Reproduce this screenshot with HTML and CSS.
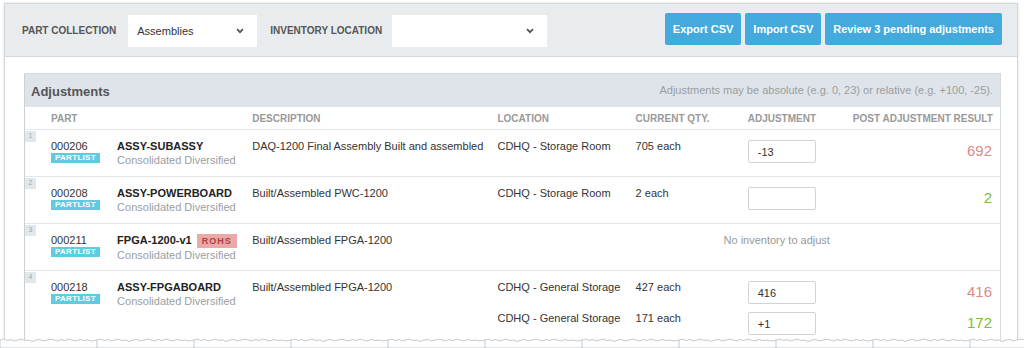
FILE: index.html
```html
<!DOCTYPE html>
<html lang="en">
<head>
  <meta charset="UTF-8" />
  <title>Inventory | Adjustments</title>
  <link rel="stylesheet" href="styles.css">
</head>
<body>
  <div class="frame">
    <div class="toolbar">
      <span class="tb-label">Part Collection</span>
      <div class="select"><span>Assemblies</span><svg width="8" height="6" viewBox="0 0 8 6"><path d="M1 1.2 4 4.2 7 1.2" fill="none" stroke="#555" stroke-width="1.8"/></svg></div>
      <span class="tb-label loc">Inventory Location</span>
      <div class="select wide"><span></span><svg width="8" height="6" viewBox="0 0 8 6"><path d="M1 1.2 4 4.2 7 1.2" fill="none" stroke="#555" stroke-width="1.8"/></svg></div>
      <div class="actions">
        <button>Export CSV</button>
        <button>Import CSV</button>
        <button>Review 3 pending adjustments</button>
      </div>
    </div>

    <div class="content">
      <div class="panel">
        <div class="panel-head">
          <h2>Adjustments</h2>
          <span class="note">Adjustments may be absolute (e.g. 0, 23) or relative (e.g. +100, -25).</span>
        </div>
        <table>
          <colgroup>
            <col style="width:92px"><col style="width:135px"><col style="width:245px"><col style="width:138px">
            <col style="width:112px"><col style="width:105px"><col style="width:147px">
          </colgroup>
          <thead>
            <tr><th class="c-part">Part</th><th></th><th>Description</th><th>Location</th><th>Current Qty.</th><th>Adjustment</th><th class="c-res">Post Adjustment Result</th></tr>
          </thead>
          <tbody>
            <tr class="item">
              <td class="c-part"><span class="num">1</span>000206<br><span class="tag">Partlist</span></td>
              <td><b>ASSY-SUBASSY</b><div class="muted">Consolidated Diversified</div></td>
              <td>DAQ-1200 Final Assembly Built and assembled</td>
              <td>CDHQ - Storage Room</td>
              <td>705 each</td>
              <td><input class="adj" value="-13"></td>
              <td class="c-res down">692</td>
            </tr>
            <tr class="item">
              <td class="c-part"><span class="num">2</span>000208<br><span class="tag">Partlist</span></td>
              <td><b>ASSY-POWERBOARD</b><div class="muted">Consolidated Diversified</div></td>
              <td>Built/Assembled PWC-1200</td>
              <td>CDHQ - Storage Room</td>
              <td>2 each</td>
              <td><input class="adj" value=""></td>
              <td class="c-res up">2</td>
            </tr>
            <tr class="item">
              <td class="c-part"><span class="num">3</span>000211<br><span class="tag">Partlist</span></td>
              <td><b>FPGA-1200-v1</b><span class="rohs">ROHS</span><div class="muted">Consolidated Diversified</div></td>
              <td>Built/Assembled FPGA-1200</td>
              <td colspan="4" class="empty">No inventory to adjust</td>
            </tr>
            <tr class="sub first">
              <td class="c-part" rowspan="2"><span class="num">4</span>000218<br><span class="tag">Partlist</span></td>
              <td rowspan="2"><b>ASSY-FPGABOARD</b><div class="muted">Consolidated Diversified</div></td>
              <td rowspan="2">Built/Assembled FPGA-1200</td>
              <td>CDHQ - General Storage</td>
              <td>427 each</td>
              <td><input class="adj" value="416"></td>
              <td class="c-res down">416</td>
            </tr>
            <tr class="sub">
              <td>CDHQ - General Storage</td>
              <td>171 each</td>
              <td><input class="adj" value="+1"></td>
              <td class="c-res up">172</td>
            </tr>
          </tbody>
        </table>
      </div>
    </div>
  </div>

  <svg class="tear" width="1024" height="14" viewBox="0 0 1024 14">
    <defs>
      <pattern id="torn" width="97" height="14" patternUnits="userSpaceOnUse">
        <path d="M0 6 L4 5 L7 6.5 L11 5.5 L14 7 L18 6 L21 5 L25 6.5 L29 6 L32 7.5 L36 6 L40 5.5 L43 7 L47 6 L51 5 L54 6 L58 7 L61 5.5 L65 6.5 L69 5 L72 6 L76 7 L80 5.5 L84 6.5 L88 6 L92 7 L97 6 L97 14 L0 14 Z" fill="#fff" stroke="#c4c8cb" stroke-width="1"/>
      </pattern>
    </defs>
    <rect x="0" y="0" width="1024" height="14" fill="url(#torn)"/>
  </svg>
</body>
</html>
```

FILE: styles.css
```css
*{box-sizing:border-box;font-family:"Liberation Sans",Arial,sans-serif}
html,body{height:348px;overflow:hidden}
body{margin:0;background:#fff;color:#333;font-size:11px;position:relative}

.frame{
  margin:3px 6px 0 4px;height:370px;
  border:1px solid #d3d6d9;box-shadow:0 0 3px rgba(0,0,0,.12);
  background:#fff;
}

.toolbar{
  height:53px;background:#e9ecee;border-bottom:1px solid #d6dadd;
  display:flex;align-items:center;padding:0 15px 0 17px;
}
.tb-label{font-size:10px;font-weight:bold;text-transform:uppercase;color:#555;margin-right:12px}
.tb-label.loc{margin-right:10px}
.select{
  width:129px;height:32px;background:#fff;margin:2px 13px 0 0;
  display:flex;align-items:center;justify-content:space-between;padding:0 13px 0 9px;
  font-size:11px;color:#333;
}
.select.wide{width:155px}
.actions{margin-left:auto;display:flex;gap:4px;margin-top:-2px}
.actions button{
  height:32px;border:none;border-radius:2px;background:#44a9dd;color:#fff;
  font-size:11px;font-weight:bold;padding:0 8px;
}

.content{padding:16px 16px 0 19px}
.panel{border:1px solid #d4dbe0;border-left-color:#c9d1d7}
.panel-head{
  height:33px;background:#dee4e9;
  display:flex;align-items:center;justify-content:space-between;padding:2px 7px 0 6px;
}
.panel-head h2{margin:0;font-size:13px;color:#555;font-weight:bold}
.note{font-size:11px;color:#9a9ea2;margin-top:-4px}

table{width:100%;table-layout:fixed;border-collapse:separate;border-spacing:0}
th{
  height:23px;padding:0;text-align:left;vertical-align:middle;white-space:nowrap;
  font-size:10px;font-weight:bold;text-transform:uppercase;color:#999;
  border-bottom:1px solid #e3e7ea;
}
td{padding:9px 0 0;vertical-align:top;line-height:14px;color:#333;border-bottom:1px solid #e3e7ea}
.item td{height:47px}
.c-part{padding-left:26px;position:relative}
.c-res{text-align:right;padding-right:8px}
td.c-res{font-size:15px;line-height:18px;padding-top:12px}
.down{color:#dc8a86}
.up{color:#7fba42}

.num{
  position:absolute;left:0;top:1px;width:11px;height:11px;
  background:#e2e7eb;color:#a2a8ad;font-size:7px;line-height:9px;text-align:center;
}
.tag{
  display:inline-block;height:10px;line-height:10px;padding:0 4px;
  background:#5ecbe0;color:#fff;font-size:8px;font-weight:bold;letter-spacing:.3px;
  text-transform:uppercase;vertical-align:top;
}
td b{color:#222}
.muted{color:#9a9ea2}
.rohs{
  display:inline-block;margin-left:5px;height:14px;line-height:14px;padding:0 5px;
  background:#e9a9a8;color:#b13f3d;font-size:9px;font-weight:bold;letter-spacing:1px;
  vertical-align:top;margin-top:1px;
}
.empty{text-align:center;padding-left:56px;color:#999}

.adj{
  margin-top:1px;width:68px;height:23px;border:1px solid #cdd5da;border-radius:2px;
  padding:0 9px;font-size:11px;color:#333;background:#fff;
}
.sub td{border-bottom:none}
.sub.first td{height:40px}
.sub.first td[rowspan]{border-bottom:1px solid #e3e7ea}
.sub:not(.first) td{padding-top:0;height:38px}
.sub:not(.first) td.c-res{padding-top:3px}

.tear{position:absolute;left:0;top:334px}
```
